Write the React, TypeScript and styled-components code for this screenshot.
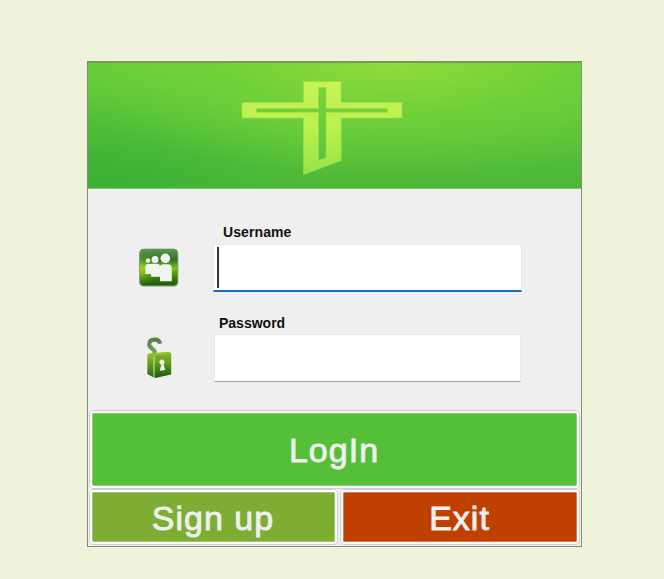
import React from "react";
import styled, { createGlobalStyle } from "styled-components";

const GlobalStyle = createGlobalStyle`
  *, *::before, *::after { box-sizing: border-box; }
  body {
    margin: 0;
    background: #eff3d9;
    font-family: "Liberation Sans", Arial, sans-serif;
    overflow: hidden;
  }
`;

const Page = styled.main`
  min-height: 579px;
  padding: 61px 0 0 87px;
  background: #eff3d9;
`;

const Window = styled.form`
  display: flex;
  flex-direction: column;
  width: 495px;
  height: 486px;
  border: 1px solid #858b80;
  background: #efefef;
`;

const Header = styled.header`
  flex: none;
  height: 127px;
  padding: 17px 0 0 152px;
  border-top: 1px solid #6fa53c;
  border-bottom: 1px solid #7dcb68;
  background:
    radial-gradient(ellipse 360px 115px at 305px -2px, rgba(146, 220, 60, 0.95), rgba(126, 214, 56, 0.6) 45%, rgba(110, 206, 56, 0) 100%),
    radial-gradient(ellipse 240px 110px at 0 127px, rgba(53, 174, 54, 0.85), rgba(57, 176, 54, 0) 100%),
    linear-gradient(178deg, #64cc3a, #5bc53a 50%, #4db638);
`;

const Logo = styled.svg`
  display: block;
  width: 164px;
  height: 98px;
`;

const Fields = styled.section`
  flex: none;
  height: 221px;
  padding: 34px 0 0 50px;
`;

const FieldRow = styled.div<{ $gap: number }>`
  display: flex;
  margin-bottom: ${(p) => p.$gap}px;
`;

const FieldIcon = styled.svg<{ $top: number }>`
  flex: none;
  width: 42px;
  height: 42px;
  margin: ${(p) => p.$top}px 33px 0 0;
`;

const FieldBody = styled.div`
  width: 309px;
`;

const Label = styled.label<{ $indent: number; $spacing: number; $height: number }>`
  display: block;
  height: ${(p) => p.$height}px;
  padding-left: ${(p) => p.$indent}px;
  font-size: 14px;
  font-weight: 700;
  line-height: 18px;
  letter-spacing: ${(p) => p.$spacing}px;
  color: #111;
`;

const InputBox = styled.div<{ $active?: boolean }>`
  display: flex;
  align-items: flex-start;
  width: ${(p) => (p.$active ? 309 : 307)}px;
  height: 48px;
  margin-left: ${(p) => (p.$active ? 0 : 1)}px;
  padding: 2px 3px;
  border: 1px solid ${(p) => (p.$active ? "#e4eaf0" : "#e8e8e8")};
  border-bottom: ${(p) => (p.$active ? "2px solid #1470c6" : "1px solid #a2a2a2")};
  background: #fff;
`;

const Caret = styled.span`
  width: 1.5px;
  height: 41px;
  background: #333;
`;

const Actions = styled.div`
  display: grid;
  grid-template-columns: 249px 240px;
  grid-template-rows: 79px 56px;
  column-gap: 2px;
  padding-left: 1px;
`;

const ActionButton = styled.button<{ $color: string; $wide?: boolean }>`
  grid-column: ${(p) => (p.$wide ? "1 / -1" : "auto")};
  display: flex;
  align-items: center;
  justify-content: center;
  margin: 0;
  padding: 1px 1px 0 0;
  border: 3px solid #fff;
  border-radius: 4px;
  box-shadow: inset 0 0 0 1px rgba(255, 255, 255, 0.3);
  outline: 1px solid #cecece;
  outline-offset: -1px;
  background: ${(p) => p.$color} padding-box;
  color: #efefef;
  font: 34px/38px "Liberation Sans", Arial, sans-serif;
  letter-spacing: 1px;
  -webkit-text-stroke: 0.9px #efefef;
`;

export default function App() {
  return (
    <>
      <GlobalStyle />
      <Page>
        <Window onSubmit={(e) => e.preventDefault()}>
          <Header>
            <Logo viewBox="240 80 164 98">
              <defs>
                <linearGradient id="cross" x1="0" y1="0" x2="0" y2="1">
                  <stop offset="0" stopColor="#c9f355" />
                  <stop offset="0.5" stopColor="#baf04d" />
                  <stop offset="1" stopColor="#97e348" />
                </linearGradient>
              </defs>
              <path
                fill="url(#cross)"
                fillRule="evenodd"
                stroke="#9be047"
                strokeWidth="0.7"
                d="M303.5 81.5H341V102.5H402V118H341.3V160.5L303.5 174.5V118H242V102.5H303.5Z M318.5 87.5V108.5H256.5V112.3H318.5V160.5L326 157.7V112.3H387.5V108.5H326V87.5Z"
              />
            </Logo>
          </Header>

          <Fields>
            <FieldRow $gap={22}>
              <FieldIcon $top={24} viewBox="138 247 42 42">
                <defs>
                  <linearGradient id="tile" x1="0" y1="0" x2="0" y2="1">
                    <stop offset="0" stopColor="#5d9657" />
                    <stop offset="0.3" stopColor="#2f7320" />
                    <stop offset="0.52" stopColor="#86bd20" />
                    <stop offset="0.75" stopColor="#3f8710" />
                    <stop offset="1" stopColor="#1a520e" />
                  </linearGradient>
                  <radialGradient id="tileGlow" cx="0" cy="0.55" r="0.5">
                    <stop offset="0" stopColor="#b4df25" stopOpacity="0.7" />
                    <stop offset="1" stopColor="#78b51a" stopOpacity="0" />
                  </radialGradient>
                </defs>
                <rect x="139.2" y="249.5" width="39.2" height="37.3" rx="4.5" fill="#4d7044" opacity="0.4" />
                <rect x="139.7" y="249" width="38" height="36.7" rx="4" fill="url(#tile)" stroke="#6b9d59" strokeWidth="0.7" />
                <rect x="140" y="249.5" width="37" height="35.5" rx="4" fill="url(#tileGlow)" />
                <g fill="#f1f4ee">
                  <circle cx="148" cy="260.5" r="2.3" />
                  <circle cx="155" cy="259.5" r="3.5" />
                  <circle cx="165.3" cy="258.3" r="4.8" />
                  <path d="M145.3 274V266.5Q145.3 264 147.5 264H150.3Q151.2 263.8 153 263.8H157Q159.5 263.8 160 266Q161 264.3 163 264.3H167.5Q171.8 264.3 171.8 268.5V281.3H160V276.8H151V274Z" />
                </g>
              </FieldIcon>
              <FieldBody>
                <Label $indent={10} $spacing={0.1} $height={21}>Username</Label>
                <InputBox $active>
                  <Caret />
                </InputBox>
              </FieldBody>
            </FieldRow>

            <FieldRow $gap={0}>
              <FieldIcon $top={22} viewBox="138 336 42 42">
                <defs>
                  <linearGradient id="body" x1="0" y1="0" x2="0" y2="1">
                    <stop offset="0" stopColor="#87b928" />
                    <stop offset="0.4" stopColor="#66a01b" />
                    <stop offset="1" stopColor="#1a570a" />
                  </linearGradient>
                  <linearGradient id="side" x1="0" y1="0" x2="0" y2="1">
                    <stop offset="0" stopColor="#8fc12f" />
                    <stop offset="1" stopColor="#286713" />
                  </linearGradient>
                  <linearGradient id="shackle" x1="0" y1="0" x2="0" y2="1">
                    <stop offset="0" stopColor="#52844a" />
                    <stop offset="1" stopColor="#7aa95a" />
                  </linearGradient>
                </defs>
                <path
                  d="M154.6 355V351C154 349 149.2 348.2 149.2 344.5C149.2 341 151.6 339.6 154.6 339.6C157.6 339.6 159.6 341.2 160 343.8"
                  fill="none"
                  stroke="url(#shackle)"
                  strokeWidth="4.2"
                />
                <path d="M147.6 354L152.5 353L169 352L171.2 353.5V374.5L155 377.9L147.6 374Z" fill="url(#body)" />
                <path d="M147.6 354L153.6 356.2V377.2L147.6 374Z" fill="url(#side)" />
                <path d="M154 356.5V377.9" stroke="#dcebc9" strokeWidth="1" />
                <path d="M148 353.9L169 352.3L170.9 353.5L154.2 355.7Z" fill="#93c436" />
                <path d="M162 359.6A2.6 2.6 0 0 1 163.5 364.3L165.2 370L159.8 370.8L161.2 364.7A2.6 2.6 0 0 1 162 359.6Z" fill="#eef2e8" />
              </FieldIcon>
              <FieldBody>
                <Label $indent={6} $spacing={0} $height={20}>Password</Label>
                <InputBox />
              </FieldBody>
            </FieldRow>
          </Fields>

          <Actions>
            <ActionButton type="submit" $color="#56bf38" $wide>LogIn</ActionButton>
            <ActionButton type="button" $color="#7dad33">Sign up</ActionButton>
            <ActionButton type="button" $color="#c04000">Exit</ActionButton>
          </Actions>
        </Window>
      </Page>
    </>
  );
}
